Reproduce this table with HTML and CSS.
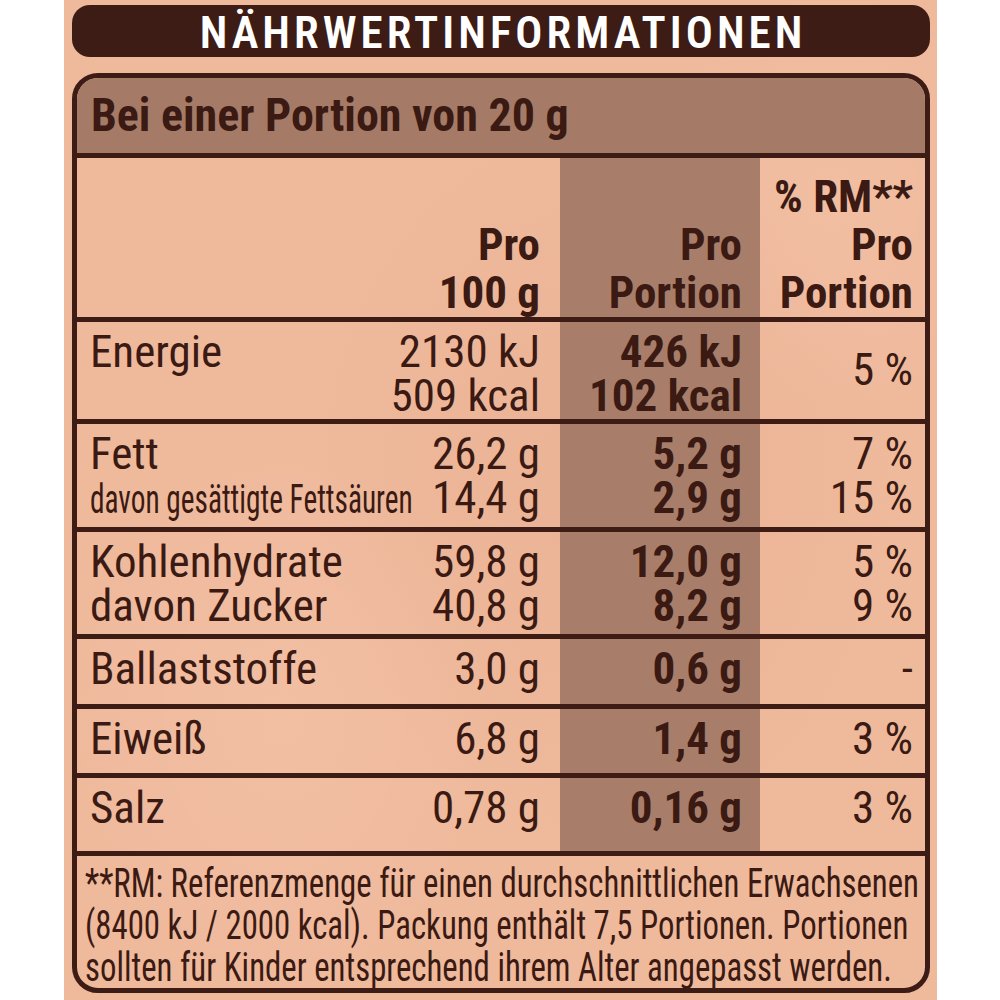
FILE: index.html
```html
<!DOCTYPE html>
<html lang="de">
<head>
<meta charset="utf-8">
<title>Nährwertinformationen</title>
<link rel="stylesheet" href="styles.css">
</head>
<body>
<div class="panel">
  <div class="title">NÄHRWERTINFORMATIONEN</div>
  <div class="table">
    <div class="portion">Bei einer Portion von 20 g</div>

    <div class="row head">
      <div class="c lab"></div>
      <div class="c v100"><div>Pro</div><div>100 g</div></div>
      <div class="c vpor"><div>Pro</div><div>Portion</div></div>
      <div class="c vrm"><div>% RM**</div><div>Pro</div><div>Portion</div></div>
    </div>

    <div class="row r-energie">
      <div class="c lab"><div>Energie</div></div>
      <div class="c v100"><div>2130 kJ</div><div>509 kcal</div></div>
      <div class="c vpor"><div>426 kJ</div><div>102 kcal</div></div>
      <div class="c vrm mid"><div>5 %</div></div>
    </div>

    <div class="row r-fett">
      <div class="c lab"><div>Fett</div><div><span class="sub">davon gesättigte Fettsäuren</span></div></div>
      <div class="c v100"><div>26,2 g</div><div>14,4 g</div></div>
      <div class="c vpor"><div>5,2 g</div><div>2,9 g</div></div>
      <div class="c vrm"><div>7 %</div><div>15 %</div></div>
    </div>

    <div class="row r-kh">
      <div class="c lab"><div>Kohlenhydrate</div><div>davon Zucker</div></div>
      <div class="c v100"><div>59,8 g</div><div>40,8 g</div></div>
      <div class="c vpor"><div>12,0 g</div><div>8,2 g</div></div>
      <div class="c vrm"><div>5 %</div><div>9 %</div></div>
    </div>

    <div class="row r-ball">
      <div class="c lab"><div>Ballaststoffe</div></div>
      <div class="c v100"><div>3,0 g</div></div>
      <div class="c vpor"><div>0,6 g</div></div>
      <div class="c vrm"><div>-</div></div>
    </div>

    <div class="row r-eiw">
      <div class="c lab"><div>Eiweiß</div></div>
      <div class="c v100"><div>6,8 g</div></div>
      <div class="c vpor"><div>1,4 g</div></div>
      <div class="c vrm"><div>3 %</div></div>
    </div>

    <div class="row r-salz">
      <div class="c lab"><div>Salz</div></div>
      <div class="c v100"><div>0,78 g</div></div>
      <div class="c vpor"><div>0,16 g</div></div>
      <div class="c vrm"><div>3 %</div></div>
    </div>

    <div class="foot">
      <div><span class="fl">**RM: Referenzmenge für einen durchschnittlichen Erwachsenen</span></div>
      <div><span class="fl">(8400 kJ / 2000 kcal). Packung enthält 7,5 Portionen. Portionen</span></div>
      <div><span class="fl">sollten für Kinder entsprechend ihrem Alter angepasst werden.</span></div>
    </div>
  </div>
</div>
</body>
</html>
```

FILE: styles.css
```css
html, body {
  margin: 0;
  padding: 0;
  background: #ffffff;
}

body {
  font-family: Roboto, "Open Sans", "DejaVu Sans", sans-serif;
  font-stretch: 75%;
  color: #3a1a12;
}

.panel {
  width: 873px;
  margin-left: 64px;
  height: 1000px;
  box-sizing: border-box;
  padding: 5px 7px 0 8px;
  background-color: #efb99c;
  background-image:
    radial-gradient(ellipse 420px 520px at 62% 48%, rgba(214, 150, 122, 0.18), rgba(214, 150, 122, 0) 70%),
    radial-gradient(ellipse 300px 380px at 25% 72%, rgba(255, 214, 190, 0.22), rgba(255, 214, 190, 0) 70%),
    radial-gradient(ellipse 260px 300px at 88% 20%, rgba(255, 214, 190, 0.18), rgba(255, 214, 190, 0) 70%);
  overflow: hidden;
}

.title {
  height: 52px;
  box-sizing: border-box;
  padding-top: 3px;
  line-height: 49px;
  background: #3d1c15;
  border-radius: 18px;
  color: #ffffff;
  text-align: center;
  font-weight: 600;
  font-size: 45px;
  letter-spacing: 4px;
  padding-left: 4px;
}

.table {
  margin-top: 16px;
  height: 920px;
  box-sizing: border-box;
  border: 5px solid #3d1c15;
  border-radius: 26px;
  overflow: hidden;
  display: flex;
  flex-direction: column;
}

.portion {
  height: 75px;
  line-height: 75px;
  background: #a57b67;
  font-weight: 700;
  font-size: 46px;
  padding-left: 14px;
  white-space: nowrap;
}

.row {
  display: grid;
  grid-template-columns: 300px 183px 200px 1fr;
  border-top: 5px solid #3d1c15;
  font-size: 45px;
  line-height: 44px;
  white-space: nowrap;
}

.c {
  padding-top: 8px;
}

.lab {
  padding-left: 13px;
}

.v100 {
  text-align: right;
  padding-right: 20px;
}

.vpor {
  text-align: right;
  padding-right: 18px;
  background: #a87e6a;
  font-weight: 700;
}

.vrm {
  text-align: right;
  padding-right: 12px;
}

.mid {
  padding-top: 0;
  align-self: center;
}

.sub {
  display: inline-block;
  font-size: 41px;
  transform: scaleX(0.715);
  transform-origin: left center;
}

.head {
  height: 160px;
  font-weight: 700;
  line-height: 48px;
}

.head .c {
  padding-top: 0;
  display: flex;
  flex-direction: column;
  justify-content: flex-end;
}

.r-energie { height: 98px; }
.r-fett { height: 104px; }
.r-kh { height: 103px; }
.r-ball { height: 66px; }
.r-eiw { height: 64px; }
.r-salz { height: 74px; }

.foot {
  flex: 1;
  border-top: 5px solid #3d1c15;
  padding: 6px 8px 0 8px;
  font-size: 41px;
  line-height: 42px;
  white-space: nowrap;
}

.fl {
  display: inline-block;
  transform: scaleX(0.8);
  transform-origin: left center;
}
```
